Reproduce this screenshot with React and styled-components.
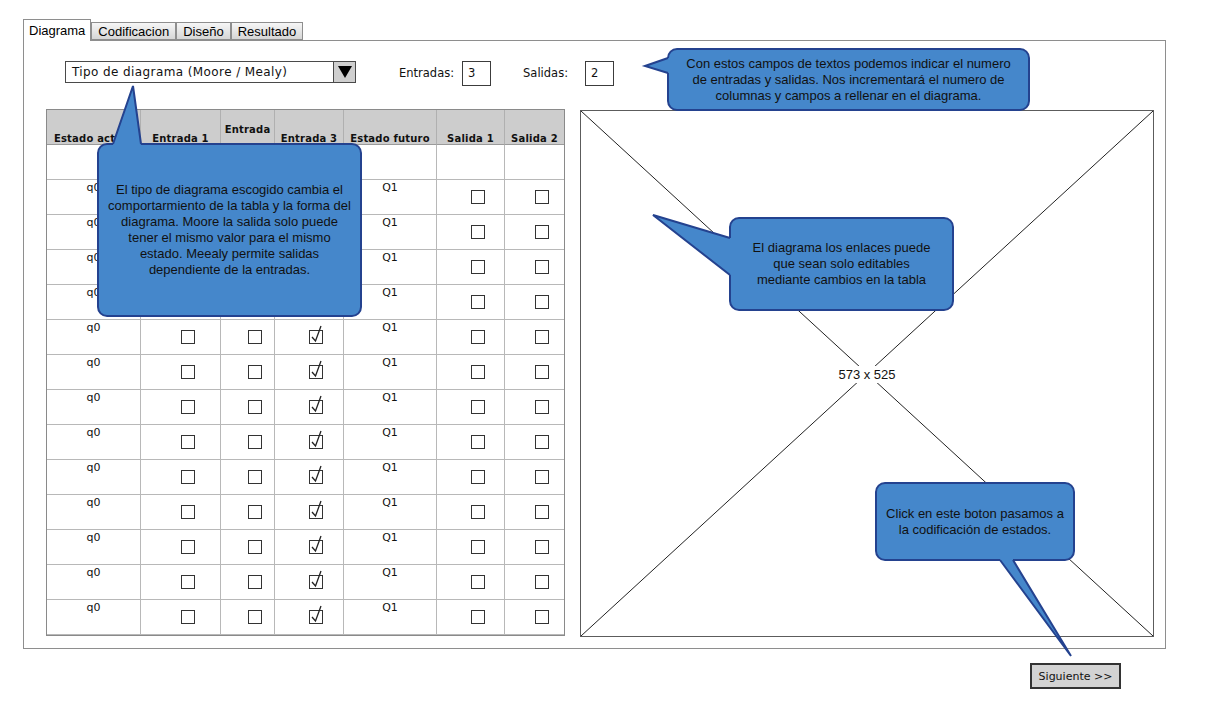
import React from "react";
import styled, { createGlobalStyle } from "styled-components";

const Global = createGlobalStyle`
  html, body { margin: 0; padding: 0; background: #ffffff; }
  body { font-family: "Liberation Sans", Arial, sans-serif; }
  * { box-sizing: border-box; }
`;

const SKETCH = `"DejaVu Sans", "Liberation Sans", sans-serif`;

const Page = styled.div`
  position: relative;
  width: 1231px;
  height: 709px;
  padding: 19px 0 0 23px;
`;

const TabBar = styled.div`
  display: flex;
  align-items: flex-end;
  height: 21px;
`;

const Tab = styled.div`
  position: relative;
  display: flex;
  align-items: center;
  height: ${(p) => (p.$active ? "22px" : "18px")};
  padding: 0 ${(p) => (p.$active ? "5px" : "6px")};
  margin-bottom: ${(p) => (p.$active ? "-1px" : "0")};
  z-index: ${(p) => (p.$active ? 2 : 1)};
  border: 1px solid #8e8e8e;
  border-bottom: ${(p) => (p.$active ? "none" : "1px solid #8e8e8e")};
  background: ${(p) =>
    p.$active ? "#ffffff" : "linear-gradient(#f6f6f6, #d6d6d6)"};
  font-family: "Liberation Sans", Arial, sans-serif;
  font-size: 13px;
  color: #000;
`;

const Panel = styled.div`
  width: 1143px;
  height: 609px;
  border: 1px solid #8e8e8e;
  padding: 20px 0 0 41px;
`;

const Controls = styled.div`
  display: flex;
  align-items: flex-start;
  height: 25px;
`;

const Select = styled.div`
  display: flex;
  width: 291px;
  height: 22px;
  border: 1px solid #4a4a4a;
  background: #fff;
`;

const SelectText = styled.div`
  flex: 1;
  padding-left: 6px;
  font-family: ${SKETCH};
  font-size: 12px;
  letter-spacing: 0.4px;
  line-height: 20px;
  color: #111;
  white-space: nowrap;
`;

const SelectButton = styled.div`
  width: 22px;
  border-left: 1px solid #4a4a4a;
  background: #cfcfcf;
  display: flex;
  align-items: center;
  justify-content: center;
`;

const FieldLabel = styled.div`
  margin-left: ${(p) => p.$ml}px;
  margin-top: 5px;
  font-family: ${SKETCH};
  font-size: 11.5px;
  line-height: 14px;
  color: #111;
`;

const NumberBox = styled.div`
  margin-left: ${(p) => p.$ml}px;
  width: 29px;
  height: 25px;
  border: 1px solid #3c3c3c;
  padding-left: 5px;
  font-family: ${SKETCH};
  font-size: 11.5px;
  line-height: 23px;
  color: #111;
`;

const Body = styled.div`
  display: flex;
  align-items: flex-start;
  margin-top: 23px;
  margin-left: -19px;
`;

const Table = styled.div`
  width: 519px;
  height: 527px;
  overflow: hidden;
  border: 1px solid #8a8a8a;
  display: grid;
  grid-template-columns: 94px 80px 54px 69px 93px 68px 59px;
  grid-auto-rows: 35px;
  align-content: start;
`;

const HeadCell = styled.div`
  background: #cdcdcd;
  border-right: ${(p) => (p.$last ? "none" : "1px solid #b0b0b0")};
  border-bottom: 1px solid #9a9a9a;
  display: flex;
  align-items: flex-end;
  justify-content: center;
  text-align: center;
  padding: 0 2px ${(p) => (p.$raised ? "9px" : "0")};
  font-family: ${SKETCH};
  font-weight: bold;
  font-size: 10px;
  letter-spacing: 0.2px;
  line-height: 10px;
  color: #111;
  white-space: nowrap;
  overflow: hidden;
`;

const Cell = styled.div`
  border-right: ${(p) => (p.$last ? "none" : "1px solid #b8b8b8")};
  border-bottom: 1px solid #b8b8b8;
  display: flex;
  justify-content: center;
  align-items: ${(p) => (p.$box ? "center" : "flex-start")};
  padding-left: ${(p) => (p.$box ? "14px" : "0")};
  padding-top: ${(p) => (p.$box ? "0" : "1px")};
  font-family: ${SKETCH};
  font-size: 11px;
  line-height: 13px;
  color: #111;
`;

const Box = styled.div`
  position: relative;
  width: 14px;
  height: 14px;
  border: 1.5px solid #333;
  background: #fff;
`;

const Tick = styled.svg`
  position: absolute;
  left: 0;
  top: -6px;
  overflow: visible;
`;

const Diagram = styled.div`
  position: relative;
  margin-left: 15px;
  margin-top: 1px;
  width: 574px;
  height: 527px;
  border: 1.5px solid #5c5c5c;
  display: flex;
  align-items: center;
  justify-content: center;
`;

const Cross = styled.svg`
  position: absolute;
  inset: 0;
  width: 100%;
  height: 100%;
`;

const DiagramLabel = styled.span`
  position: relative;
  background: #fff;
  padding: 1px 2px;
  font-family: "Liberation Sans", Arial, sans-serif;
  font-size: 13px;
  color: #111;
  margin-top: 2px;
`;

const Footer = styled.div`
  display: flex;
  justify-content: flex-end;
  width: 1143px;
  padding-right: 45px;
  margin-top: 14px;
`;

const Button = styled.div`
  width: 91px;
  height: 26px;
  border: 2px solid #333;
  background: #d3d3d3;
  display: flex;
  align-items: center;
  justify-content: center;
  font-family: ${SKETCH};
  font-size: 11px;
  color: #111;
`;

const CalloutWrap = styled.div`
  position: absolute;
  left: ${(p) => p.$x}px;
  top: ${(p) => p.$y}px;
  width: ${(p) => p.$w}px;
  height: ${(p) => p.$h}px;
  z-index: 10;
`;

const Bubble = styled.div`
  position: absolute;
  inset: 0;
  background: #4587cb;
  border: 2px solid #24428f;
  border-radius: 10px;
`;

const Pointer = styled.svg`
  position: absolute;
  left: 0;
  top: 0;
  width: 100%;
  height: 100%;
  overflow: visible;
`;

const BubbleText = styled.div`
  position: absolute;
  inset: 0;
  display: flex;
  align-items: center;
  justify-content: center;
  text-align: center;
  font-family: "Liberation Sans", Arial, sans-serif;
  font-size: 13px;
  line-height: 16px;
  color: #111;
  white-space: pre;
`;

function Callout({ x, y, w, h, base1, tip, base2, inner1, inner2, text }) {
  const pts = [inner1, base1, tip, base2, inner2].map((p) => p.join(",")).join(" ");
  const line = [base1, tip, base2].map((p) => p.join(",")).join(" ");
  return (
    <CalloutWrap $x={x} $y={y} $w={w} $h={h}>
      <Bubble />
      <Pointer>
        <polygon points={pts} fill="#4587cb" />
        <polyline points={line} fill="none" stroke="#24428f" strokeWidth="2" strokeLinejoin="miter" />
      </Pointer>
      <BubbleText>{text}</BubbleText>
    </CalloutWrap>
  );
}

function CheckBox({ checked }) {
  return (
    <Box>
      {checked && (
        <Tick width="14" height="20" viewBox="0 0 14 20">
          <polyline points="2,12 5.5,16 11,1" fill="none" stroke="#222" strokeWidth="1.3" />
        </Tick>
      )}
    </Box>
  );
}

const headers = [
  { t: "Estado actual" },
  { t: "Entrada 1" },
  { t: "Entrada", raised: true },
  { t: "Entrada 3" },
  { t: "Estado futuro" },
  { t: "Salida 1" },
  { t: "Salida 2" },
];

function DataRow() {
  return (
    <>
      <Cell>q0</Cell>
      <Cell $box><CheckBox /></Cell>
      <Cell $box><CheckBox /></Cell>
      <Cell $box><CheckBox checked /></Cell>
      <Cell>Q1</Cell>
      <Cell $box><CheckBox /></Cell>
      <Cell $box $last><CheckBox /></Cell>
    </>
  );
}

export default function App() {
  const rows = Array.from({ length: 13 }, (_, i) => i);
  return (
    <Page>
      <Global />
      <TabBar>
        <Tab $active>Diagrama</Tab>
        <Tab>Codificacion</Tab>
        <Tab>Diseño</Tab>
        <Tab>Resultado</Tab>
      </TabBar>
      <Panel>
        <Controls>
          <Select>
            <SelectText>Tipo de diagrama (Moore / Mealy)</SelectText>
            <SelectButton>
              <svg width="16" height="14" viewBox="0 0 16 14">
                <polygon points="1,1 15,1 8,13" fill="#000" />
              </svg>
            </SelectButton>
          </Select>
          <FieldLabel $ml={43}>Entradas:</FieldLabel>
          <NumberBox $ml={8}>3</NumberBox>
          <FieldLabel $ml={32}>Salidas:</FieldLabel>
          <NumberBox $ml={17}>2</NumberBox>
        </Controls>
        <Body>
          <Table>
            {headers.map((h, i) => (
              <HeadCell key={h.t + i} $last={i === 6} $raised={h.raised}>{h.t}</HeadCell>
            ))}
            {headers.map((h, i) => (
              <Cell key={"b" + i} $last={i === 6} />
            ))}
            {rows.map((r) => (
              <DataRow key={r} />
            ))}
          </Table>
          <Diagram>
            <Cross viewBox="0 0 100 100" preserveAspectRatio="none">
              <line x1="0" y1="0" x2="100" y2="100" stroke="#222" strokeWidth="1" vectorEffect="non-scaling-stroke" />
              <line x1="100" y1="0" x2="0" y2="100" stroke="#222" strokeWidth="1" vectorEffect="non-scaling-stroke" />
            </Cross>
            <DiagramLabel>573 x 525</DiagramLabel>
          </Diagram>
        </Body>
      </Panel>
      <Footer>
        <Button>Siguiente &gt;&gt;</Button>
      </Footer>

      <Callout
        x={667} y={48} w={363} h={63}
        inner1={[4, 10]} base1={[1, 10]} tip={[-22, 18]} base2={[1, 25]} inner2={[4, 25]}
        text={"Con estos campos de textos podemos indicar el numero\nde entradas y salidas. Nos incrementará el numero de\ncolumnas y campos a rellenar en el diagrama."}
      />
      <Callout
        x={97} y={143} w={265} h={174}
        inner1={[16, 4]} base1={[16, 1]} tip={[36, -57]} base2={[44, 1]} inner2={[44, 4]}
        text={"El tipo de diagrama escogido cambia el\ncomportarmiento de la tabla y la forma del\ndiagrama. Moore la salida solo puede\ntener el mismo valor para el mismo\nestado. Meealy permite salidas\ndependiente de la entradas."}
      />
      <Callout
        x={729} y={217} w={225} h={94}
        inner1={[4, 21]} base1={[1, 21]} tip={[-76, -2]} base2={[1, 58]} inner2={[4, 58]}
        text={"El diagrama los enlaces puede\nque sean solo editables\nmediante cambios en la tabla"}
      />
      <Callout
        x={875} y={482} w={200} h={79}
        inner1={[125, 75]} base1={[125, 78]} tip={[196, 174]} base2={[138, 78]} inner2={[138, 75]}
        text={"Click en este boton pasamos a\nla codificación de estados."}
      />
    </Page>
  );
}
